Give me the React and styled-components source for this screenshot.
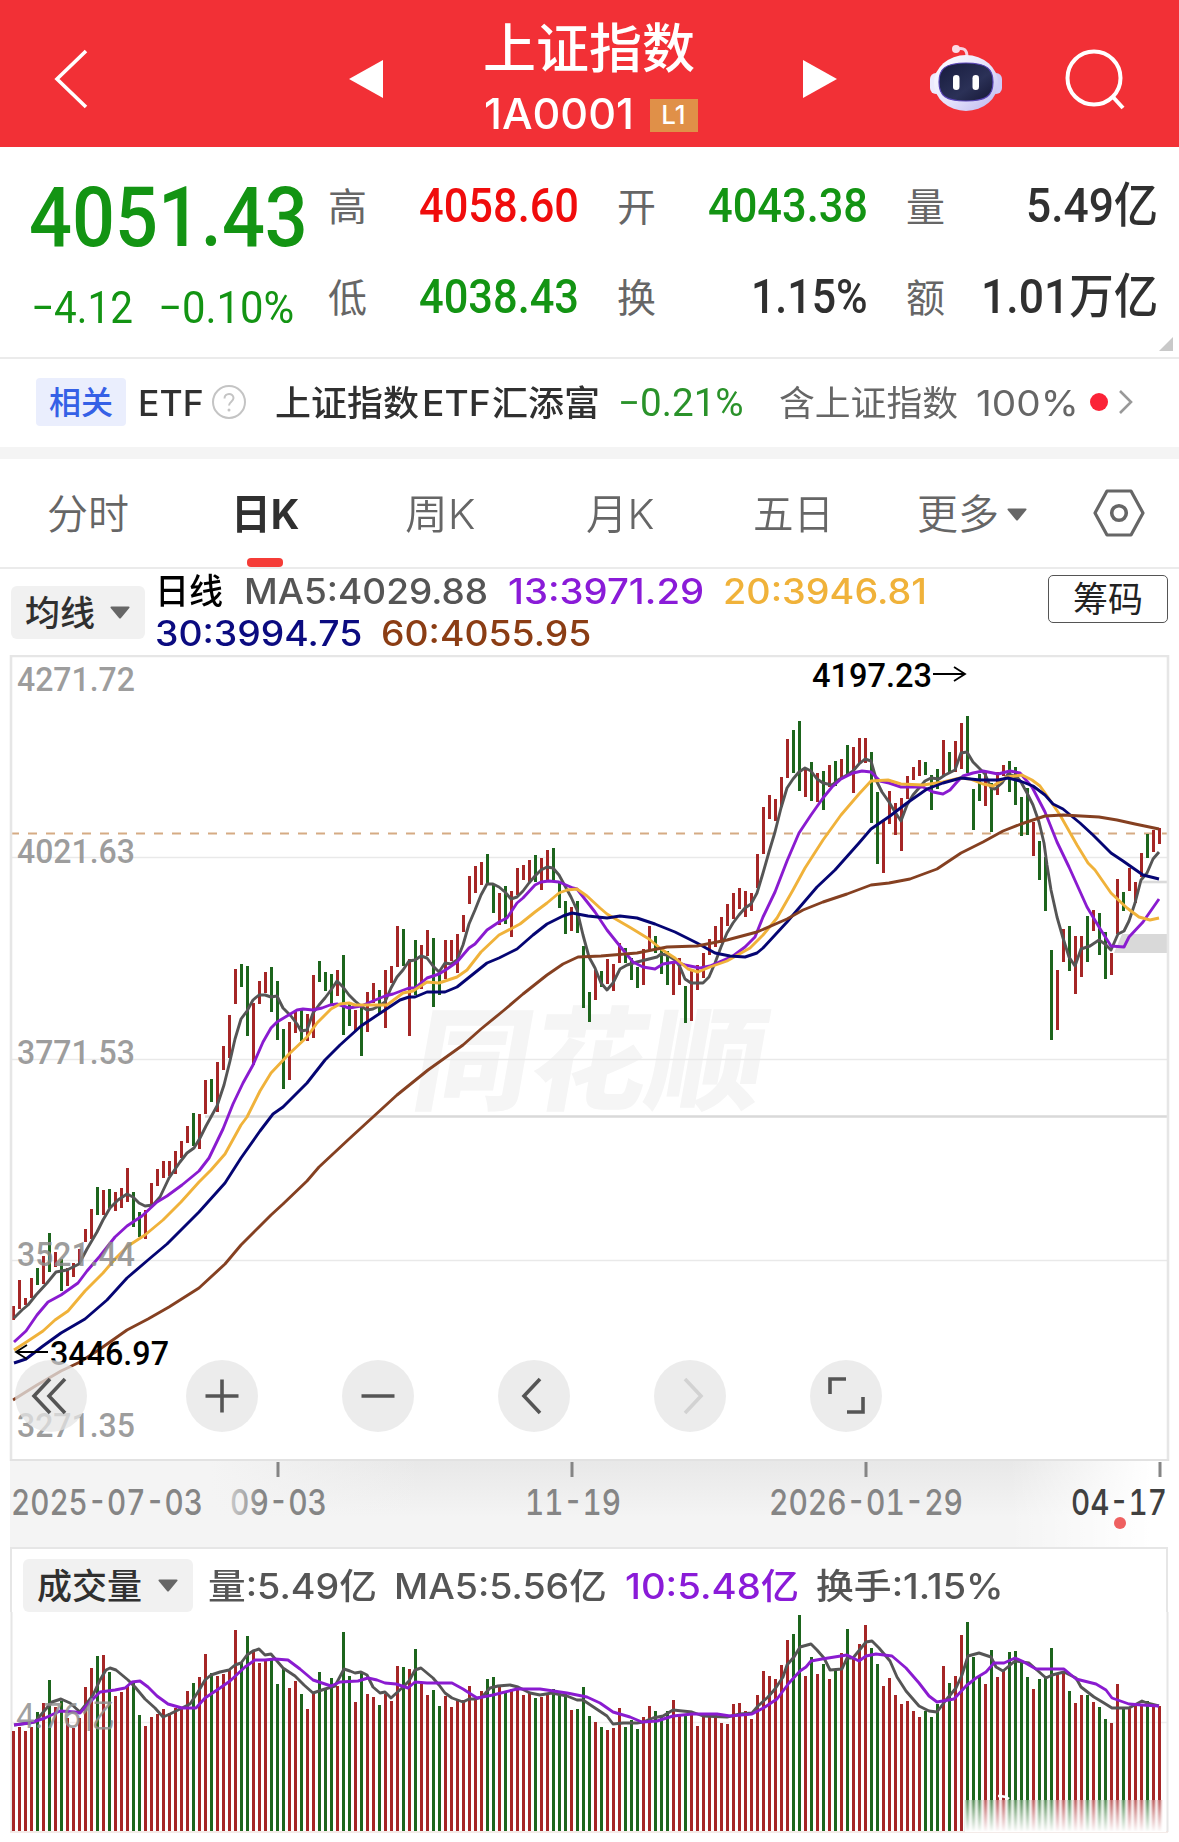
import React, { useLayoutEffect, useRef, useState } from 'react'
import styled, { createGlobalStyle } from 'styled-components'

const RED = '#a52626'
const GREEN = '#1d651d'
const DIN = "Roboto, 'Noto Sans CJK SC', sans-serif"
const SANS = "Inter, 'Noto Sans CJK SC', sans-serif"

// one entry per trading day: high, low, volume top, r(ise) / g (fall)
const DAYS = `
1306 1320 1731 r|1280 1309 1727 r|1298 1305 1731 r|1278 1298 1727 r|1268 1285 1712 g|1256 1284 1703 r|1233 1272 1680 g|1252 1267 1707 r
1259 1291 1701 g|1268 1286 1718 r|1263 1277 1728 r|1249 1264 1718 r|1229 1242 1687 r|1209 1239 1668 r|1187 1215 1656 g|1190 1215 1655 r
1189 1208 1672 g|1192 1211 1696 r|1188 1208 1692 r|1168 1202 1686 r|1192 1227 1683 g|1212 1237 1715 g|1210 1239 1726 r|1183 1205 1717 r
1169 1186 1714 r|1161 1178 1709 r|1161 1176 1713 r|1151 1174 1708 r|1141 1158 1708 r|1126 1143 1691 r|1113 1146 1683 g|1114 1149 1677 r
1080 1114 1654 r|1079 1102 1673 g|1062 1112 1676 r|1046 1070 1674 r|1015 1058 1670 r|969 1004 1630 r|964 987 1663 g|966 1036 1636 g
1003 1065 1651 r|981 1004 1663 r|972 993 1660 r|967 1012 1660 g|981 1040 1684 g|1029 1089 1668 g|1022 1080 1688 r|1010 1033 1681 r
1010 1041 1694 g|1014 1041 1709 r|975 1038 1693 r|961 982 1672 g|972 991 1688 g|974 1004 1678 g|970 996 1686 r|955 1035 1632 g
1004 1026 1676 g|1010 1031 1702 r|1005 1056 1673 g|992 1032 1694 r|983 1003 1697 r|990 1013 1705 g|970 1028 1694 r|966 983 1701 r
926 967 1666 r|929 966 1667 g|959 1036 1669 r|940 995 1649 g|945 989 1683 r|930 956 1695 r|938 1007 1690 g|970 995 1706 g
940 979 1696 r|940 961 1707 r|934 973 1701 r|915 932 1700 r|876 904 1686 r|866 893 1698 r|862 885 1691 r|854 884 1679 g
885 913 1677 g|893 925 1687 r|886 924 1691 g|891 937 1689 r|868 895 1688 r|865 880 1695 r|860 882 1692 r|855 882 1698 g
858 890 1697 r|850 880 1694 r|848 880 1689 g|883 908 1693 g|901 934 1694 g|907 931 1710 r|901 933 1709 g|946 1008 1687 g
992 1022 1716 g|970 1000 1722 r|971 987 1727 g|959 984 1730 r|964 991 1728 r|943 963 1708 r|948 963 1727 g|958 980 1720 g
967 988 1729 g|949 985 1717 r|926 951 1706 r|936 953 1711 g|948 974 1717 g|951 985 1711 g|962 995 1700 r|958 985 1715 r
986 1023 1715 g|971 1021 1712 r|965 990 1726 r|953 978 1716 r|939 955 1716 r|926 947 1713 r|917 943 1723 r|904 926 1724 r
893 919 1704 r|888 909 1703 r|891 917 1711 r|893 911 1719 r|854 888 1695 r|807 854 1671 r|795 819 1676 r|799 821 1679 r
777 807 1665 r|739 778 1640 r|730 773 1634 g|721 791 1615 g|768 797 1676 r|762 801 1657 g|773 802 1674 r|771 810 1664 g
765 787 1679 r|761 786 1670 g|759 779 1653 r|745 774 1629 g|747 793 1658 r|738 763 1644 r|738 763 1625 r|752 823 1648 g
792 864 1664 g|820 873 1686 r|791 824 1678 r|803 835 1695 r|798 851 1704 r|776 799 1701 r|767 780 1711 r|760 776 1717 r
762 775 1711 g|775 810 1717 g|769 789 1704 g|740 775 1666 r|752 773 1683 g|741 772 1676 r|723 769 1635 r|716 773 1622 g
789 830 1657 g|774 801 1676 g|772 806 1684 r|783 832 1650 g|772 795 1677 r|765 776 1670 r|761 792 1652 g|767 805 1651 g
797 836 1663 g|788 835 1677 g|822 856 1689 r|841 880 1679 g|857 911 1676 g|950 1040 1648 g|970 1030 1674 r|929 962 1673 r
926 971 1691 g|936 994 1703 r|936 977 1695 r|916 962 1695 g|910 931 1702 r|913 955 1707 g|932 979 1719 g|953 975 1723 r
879 934 1684 r|892 911 1709 g|868 891 1708 r|882 903 1706 r|853 877 1705 r|834 858 1701 g|830 852 1706 r|828 844 1706 r
`
    .trim()
    .split(/[|\n]/)
    .map((row, i) => {
        const [high, low, vol, dir] = row.split(' ')
        return { x: 11 + i * 6, high: +high, low: +low, vol: +vol, color: dir === 'r' ? RED : GREEN }
    })

const PRICE_LINES = [
    {
        color: '#555555',
        points: '14,1318 22,1310 28,1305 36,1295 47,1283 56,1272 67,1270 79,1264 87,1249 97,1232 103,1220 110,1208 118,1200 127,1194 133,1197 139,1203 145,1206 153,1205 160,1197 169,1178 180,1162 187,1153 194,1148 200,1138 206,1126 217,1106 224,1085 230,1061 235,1039 241,1019 247,1011 253,1000 259,995 265,995 271,997 277,996 283,1008 291,1016 297,1024 301,1031 307,1030 313,1013 319,1005 325,998 331,990 337,981 343,987 349,995 355,1001 361,1006 367,1010 373,1009 379,1006 385,1002 391,988 397,977 403,970 409,961 415,960 421,956 427,958 433,966 439,972 445,963 451,964 457,960 463,945 469,924 475,910 481,895 487,884 493,884 499,887 505,892 511,899 517,897 523,891 529,883 535,876 541,870 547,867 553,868 559,875 565,886 571,897 577,910 583,935 589,957 595,968 601,983 607,990 613,983 620,969 627,965 637,962 649,959 657,957 661,954 667,955 675,960 680,967 685,979 691,983 703,983 709,977 715,963 721,947 727,933 733,923 739,915 745,908 751,904 757,893 763,873 769,852 775,832 781,808 787,788 793,779 799,772 805,768 811,771 817,779 823,783 832,785 838,780 847,775 853,771 859,764 865,759 871,761 877,782 882,792 889,802 895,812 901,821 907,805 913,795 919,788 925,781 931,778 939,779 945,775 955,770 961,753 967,752 973,762 981,770 985,774 991,788 995,789 1002,783 1008,774 1017,777 1021,782 1027,793 1033,805 1039,822 1044,843 1047,865 1051,890 1057,917 1063,938 1069,957 1075,966 1081,949 1090,946 1099,940 1105,944 1111,950 1118,934 1124,931 1129,921 1135,903 1141,880 1147,873 1153,859 1159,852',
    },
    {
        color: '#8a1bd0',
        points: '14,1342 26,1331 37,1315 48,1302 61,1295 78,1283 87,1271 100,1256 115,1237 127,1226 142,1216 157,1202 167,1196 182,1185 199,1171 209,1158 223,1129 233,1104 243,1083 253,1065 263,1042 271,1028 277,1022 287,1016 297,1010 303,1009 313,1010 322,1008 330,1005 337,1004 349,1008 361,1006 373,1001 385,996 393,994 409,988 415,988 427,978 439,974 447,969 457,962 469,948 475,944 487,930 499,922 507,918 517,903 523,898 535,885 541,882 549,881 559,882 573,888 577,889 595,912 607,930 619,945 633,962 643,967 655,969 663,964 675,962 685,965 700,968 710,966 733,956 745,947 755,937 763,917 775,892 787,861 799,833 811,815 823,798 832,787 841,779 853,773 862,771 871,772 877,778 880,781 889,783 901,787 923,787 933,792 943,794 950,790 957,782 963,776 973,773 983,771 998,774 1010,771 1020,773 1032,787 1045,812 1057,842 1069,867 1087,907 1099,927 1111,946 1124,947 1129,937 1143,922 1159,899',
    },
    {
        color: '#f0b23a',
        points: '14,1350 28,1341 43,1331 55,1320 68,1311 85,1291 103,1273 115,1259 128,1246 145,1235 163,1220 181,1202 199,1182 211,1170 225,1154 241,1125 247,1117 260,1091 271,1073 289,1054 307,1037 317,1023 331,1009 340,1004 349,1003 355,1005 370,1005 387,1005 403,993 413,991 427,982 439,983 457,977 467,970 481,952 499,935 520,924 535,912 547,903 559,893 567,890 577,889 587,896 600,908 607,914 631,928 649,939 661,949 675,958 688,969 698,972 710,967 727,961 750,948 763,935 777,918 793,890 805,868 823,840 841,815 859,794 871,781 888,780 901,784 923,785 943,782 960,778 970,779 983,784 993,786 1007,777 1022,775 1032,780 1040,786 1045,793 1060,815 1077,845 1088,863 1095,870 1111,893 1127,908 1139,917 1150,920 1159,918',
    },
    {
        color: '#050573',
        points: '14,1363 26,1359 43,1346 61,1333 85,1319 107,1300 127,1278 148,1260 167,1244 181,1230 199,1212 225,1183 241,1158 260,1131 273,1114 283,1107 295,1095 307,1083 325,1060 340,1045 361,1026 385,1010 400,1000 409,997 415,997 427,992 445,992 457,987 487,963 499,958 517,949 533,935 547,924 563,916 572,913 588,916 607,918 620,916 637,918 655,924 675,932 697,943 715,953 730,956 745,957 757,953 763,948 787,922 817,887 835,870 859,843 871,829 890,816 907,803 927,789 943,783 961,778 980,780 998,780 1008,778 1020,781 1033,786 1045,795 1053,804 1063,809 1080,823 1093,835 1111,853 1123,861 1143,875 1159,879',
    },
    {
        color: '#854021',
        points: '13,1400 37,1385 61,1371 80,1362 100,1349 127,1330 148,1319 169,1307 199,1288 225,1264 241,1245 271,1215 283,1204 307,1181 319,1167 349,1139 373,1117 397,1095 428,1070 463,1045 481,1029 503,1011 523,994 547,975 563,964 578,957 601,956 637,953 667,947 697,946 727,940 757,932 787,919 803,910 823,902 847,894 871,885 889,883 910,879 937,869 961,853 983,842 1003,831 1021,824 1045,816 1063,815 1081,816 1099,817 1117,820 1135,824 1159,829',
    },
]

const VOLUME_LINES = [
    {
        color: '#555555',
        points: '14,1725 35,1722 45,1710 52,1702 61,1699 70,1703 80,1712 87,1703 93,1695 100,1680 106,1670 110,1668 116,1670 128,1680 135,1687 145,1699 155,1708 163,1717 170,1714 182,1708 190,1704 198,1692 205,1680 211,1675 220,1672 229,1670 235,1665 241,1663 247,1655 253,1651 259,1649 265,1655 271,1654 277,1661 283,1668 295,1676 304,1685 313,1693 325,1689 335,1686 344,1669 350,1671 355,1673 361,1672 367,1675 373,1687 380,1693 385,1692 391,1698 403,1687 409,1681 415,1670 421,1668 427,1673 433,1678 439,1685 445,1693 452,1698 463,1702 469,1699 475,1699 482,1697 490,1688 498,1686 510,1685 518,1687 530,1693 540,1695 552,1693 567,1696 577,1700 583,1700 595,1708 607,1716 613,1724 623,1723 637,1723 643,1722 653,1718 663,1716 673,1710 692,1712 703,1716 727,1717 740,1714 752,1713 758,1706 768,1697 775,1689 783,1677 787,1665 794,1657 800,1647 811,1644 817,1650 824,1658 830,1670 842,1669 847,1658 853,1658 866,1642 872,1641 879,1648 890,1661 897,1677 906,1691 919,1706 929,1711 937,1712 946,1700 956,1688 962,1675 968,1656 979,1653 991,1657 996,1667 1003,1671 1015,1661 1029,1663 1046,1678 1052,1675 1064,1672 1076,1678 1081,1687 1094,1697 1104,1703 1112,1708 1129,1708 1142,1701 1147,1703 1159,1706',
    },
    {
        color: '#8a1bd0',
        points: '14,1725 30,1723 45,1718 60,1711 75,1712 80,1713 90,1702 100,1692 115,1690 125,1688 132,1682 140,1681 148,1687 157,1696 168,1704 182,1708 196,1708 205,1698 220,1688 230,1681 245,1667 255,1660 265,1660 275,1659 288,1660 300,1669 313,1680 331,1686 340,1682 358,1681 368,1678 377,1680 385,1683 396,1684 408,1688 415,1682 427,1683 452,1683 463,1689 477,1698 493,1695 517,1689 540,1689 567,1693 587,1697 600,1703 613,1712 630,1717 642,1722 657,1721 673,1716 692,1714 717,1714 730,1716 752,1714 765,1707 777,1699 789,1683 800,1671 806,1667 811,1661 822,1659 847,1655 859,1661 866,1656 876,1654 892,1656 906,1668 919,1683 929,1696 937,1702 954,1699 966,1686 976,1678 986,1672 994,1663 1004,1663 1015,1658 1022,1661 1036,1669 1064,1669 1076,1679 1096,1684 1106,1690 1112,1698 1129,1704 1142,1705 1159,1706',
    },
]

// squeezes or stretches a run of text to the given width
const FitText = ({ width, children, ...rest }) => {
    const ref = useRef(null)
    const [scale, setScale] = useState(1)
    useLayoutEffect(() => {
        setScale(width / ref.current.offsetWidth)
    }, [width, children])
    return (
        <FitBox $w={width} {...rest}>
            <FitInner ref={ref} style={{ transform: `scaleX(${scale})` }}>{children}</FitInner>
        </FitBox>
    )
}

const ChartText = ({ x, y, width, children, ...rest }) => (
    <text x={x} y={y} textLength={width} lengthAdjust="spacingAndGlyphs" {...rest}>{children}</text>
)

const Lines = ({ data, width }) => data.map(({ color, points }) => (
    <polyline key={color} points={points} fill="none" stroke={color} strokeWidth={width} strokeLinejoin="round" />
))

const Robot = () => (
    <svg width="72" height="68" viewBox="0 0 72 68">
        <defs>
            <linearGradient id="shell" x1="0" y1="0" x2="1" y2="1">
                <stop offset="0" stopColor="#ffffff" />
                <stop offset="0.55" stopColor="#e4e2fb" />
                <stop offset="1" stopColor="#b9b4ee" />
            </linearGradient>
            <linearGradient id="face" x1="0" y1="0" x2="1" y2="1">
                <stop offset="0" stopColor="#171b3d" />
                <stop offset="0.6" stopColor="#2b3157" />
                <stop offset="1" stopColor="#151634" />
            </linearGradient>
        </defs>
        <path d="M27 5 C34 3 37 6 37 13" fill="none" stroke="#f6d3e2" strokeWidth="3" />
        <circle cx="26" cy="5" r="4" fill="#fbdce6" />
        <rect x="0" y="29" width="12" height="21" rx="6" fill="#eceafd" />
        <rect x="60" y="29" width="12" height="21" rx="6" fill="#cfcaf7" />
        <ellipse cx="36" cy="39" rx="32" ry="28" fill="url(#shell)" />
        <path d="M36 19 C57 19 63 25 63 38 C63 52 56 57 36 57 C16 57 9 52 9 38 C9 25 15 19 36 19Z" fill="url(#face)" stroke="#5a45b8" strokeWidth="1.2" />
        <rect x="23" y="31" width="6.5" height="15" rx="3.2" fill="#fff" />
        <rect x="42.5" y="31" width="6.5" height="15" rx="3.2" fill="#fff" />
    </svg>
)

const Caret = ({ color = '#666' }) => (
    <svg width="20" height="13" viewBox="0 0 20 13">
        <path d="M1.5 0.5h17a1 1 0 0 1 .8 1.5L11 12a1.3 1.3 0 0 1-2 0L.7 2a1 1 0 0 1 .8-1.5z" fill={color} />
    </svg>
)

const CONTROLS = [
    { id: 'first', d: 'M35 19 19 36 35 53 M50 19 34 36 50 53' },
    { id: 'zoom-in', d: 'M19.5 36H52.5M36 19.5V52.5' },
    { id: 'zoom-out', d: 'M19.5 36H52.5' },
    { id: 'prev', d: 'M42 19 26 36 42 53' },
    { id: 'next', d: 'M31 19 47 36 31 53', off: true },
    { id: 'full', d: 'M20 34V19H36M53 37V52H37' },
]

const TABS = [
    { label: '分时', w: 176, fit: 82 },
    { label: '日K', w: 179, fit: 69, active: true },
    { label: '周K', w: 170, fit: 71 },
    { label: '月K', w: 190, fit: 69 },
    { label: '五日', w: 156, fit: 81 },
    { label: '更多', w: 202, fit: 82, more: true },
]

const STATS = [
    { label: '高', value: '4058.60', fit: 160, color: '#f00c0c' },
    { label: '开', value: '4043.38', fit: 160, color: '#139413' },
    { label: '量', value: '5.49亿', fit: 132, color: '#303030' },
    { label: '低', value: '4038.43', fit: 160, color: '#139413' },
    { label: '换', value: '1.15%', fit: 117, color: '#303030' },
    { label: '额', value: '1.01万亿', fit: 177, color: '#303030' },
]

const GRID = [857, 1059, 1260]
const SCALE = [['4271.72', 691], ['4021.63', 863], ['3771.53', 1064], ['3521.44', 1266], ['3271.35', 1437]]

function App() {
    return (
        <Page>
            <GlobalStyle />
            <Header>
                <HeaderIcon $left={53} width="36" height="62" viewBox="0 0 36 62">
                    <path d="M33 3 4 31 33 59" fill="none" stroke="#fff" strokeWidth="3.6" />
                </HeaderIcon>
                <HeaderIcon $left={260} width="34" height="38" viewBox="0 0 34 38">
                    <path d="M34 0V38L0 19z" fill="#fff" />
                </HeaderIcon>
                <TitleColumn>
                    <Title><FitText width={212}>上证指数</FitText></Title>
                    <CodeRow>
                        <FitText width={150}>1A0001</FitText>
                        <Level>L1</Level>
                    </CodeRow>
                </TitleColumn>
                <HeaderIcon width="34" height="38" viewBox="0 0 34 38">
                    <path d="M0 0V38L34 19z" fill="#fff" />
                </HeaderIcon>
                <RobotSlot><Robot /></RobotSlot>
                <HeaderIcon $left={62} width="62" height="62" viewBox="0 0 62 62">
                    <circle cx="30" cy="30" r="26.5" fill="none" stroke="#fff" strokeWidth="4" />
                    <path d="M49 49 59 60" stroke="#fff" strokeWidth="4" />
                </HeaderIcon>
            </Header>

            <Quote>
                <PriceColumn>
                    <Price><FitText width={279}>4051.43</FitText></Price>
                    <Change>
                        <FitText width={102}>−4.12</FitText>
                        <FitText width={136}>−0.10%</FitText>
                    </Change>
                </PriceColumn>
                <StatGrid>
                    {STATS.map(s => (
                        <Stat key={s.label}>
                            <StatLabel>{s.label}</StatLabel>
                            <StatValue $color={s.color}><FitText width={s.fit}>{s.value}</FitText></StatValue>
                        </Stat>
                    ))}
                </StatGrid>
                <Corner />
            </Quote>

            <EtfRow>
                <Related>相关</Related>
                <EtfText $left={12} $bold><FitText width={66}>ETF</FitText></EtfText>
                <Help width="36" height="36" viewBox="0 0 36 36">
                    <circle cx="18" cy="18" r="16" fill="none" stroke="#c4c4c4" strokeWidth="2" />
                    <path d="M13.5 14.5c0-6 9-6 9-.5 0 3.5-4.5 3.8-4.5 7.5" fill="none" stroke="#c4c4c4" strokeWidth="2" />
                    <circle cx="18" cy="26" r="1.5" fill="#c4c4c4" />
                </Help>
                <EtfText $left={28} $bold>
                    <FitText width={144}>上证指数</FitText>
                    <EtfName><FitText width={69}>ETF</FitText></EtfName>
                    <FitText width={108}>汇添富</FitText>
                </EtfText>
                <EtfChange><FitText width={126}>−0.21%</FitText></EtfChange>
                <EtfText $left={35}><FitText width={179}>含上证指数</FitText></EtfText>
                <EtfText $left={18}><FitText width={103}>100%</FitText></EtfText>
                <Dot />
                <svg width="16" height="26" viewBox="0 0 16 26">
                    <path d="M2 2 13 13 2 24" fill="none" stroke="#999" strokeWidth="2.6" />
                </svg>
            </EtfRow>
            <Strip />

            <Tabs>
                {TABS.map(t => (
                    <Tab key={t.label} $w={t.w} $active={t.active}>
                        <FitText width={t.fit}>{t.label}</FitText>
                        {t.more && <MoreCaret><Caret /></MoreCaret>}
                        {t.active && <Underline />}
                    </Tab>
                ))}
                <Tab $w={92}>
                    <Hexagon width="52" height="48" viewBox="0 0 52 48">
                        <path d="M14 2H38L50 24 38 46H14L2 24z" fill="none" stroke="#666" strokeWidth="3.2" strokeLinejoin="round" />
                        <circle cx="26" cy="24" r="7.3" fill="none" stroke="#666" strokeWidth="3.6" />
                    </Hexagon>
                </Tab>
            </Tabs>

            <Averages>
                <Picker $w={134}><FitText width={70}>均线</FitText><Caret /></Picker>
                <Legend>
                    <LegendRow>
                        <LegendItem $color="#000"><FitText width={68}>日线</FitText></LegendItem>
                        <LegendItem $color="#555" $left={21}><FitText width={244}>MA5:4029.88</FitText></LegendItem>
                        <LegendItem $color="#8a1bd8" $left={20}><FitText width={196}>13:3971.29</FitText></LegendItem>
                        <LegendItem $color="#f0b23a" $left={19}><FitText width={204}>20:3946.81</FitText></LegendItem>
                    </LegendRow>
                    <LegendRow>
                        <LegendItem $color="#0b0b80"><FitText width={207}>30:3994.75</FitText></LegendItem>
                        <LegendItem $color="#8b3d14" $left={19}><FitText width={210}>60:4055.95</FitText></LegendItem>
                    </LegendRow>
                </Legend>
                <ChipButton>筹码</ChipButton>
            </Averages>

            <PricePanel>
                <svg width="1179" height="806" viewBox="0 655 1179 806">
                    <text x="417" y="1101" fontSize="112" fontWeight="900" fill="#f5f5f5" textLength="350" lengthAdjust="spacingAndGlyphs" transform="translate(186 0) skewX(-10)" fontFamily="Noto Sans CJK SC, sans-serif">同花顺</text>
                    {GRID.map(y => <path key={y} d={`M12 ${y}.5H1167`} stroke="#e9e9e9" strokeWidth="1.5" />)}
                    <path d="M205 1116.5H1168" stroke="#d9d9d9" strokeWidth="2.6" />
                    <path d="M1142 882H1168" stroke="#dadada" strokeWidth="2.6" />
                    <path d="M1122 934H1168V953H1114z" fill="#d9d9d9" />
                    <path d="M10 833.5H1169" stroke="#d5ab84" strokeWidth="1.8" strokeDasharray="9 9" />
                    {DAYS.map(d => <rect key={d.x} x={d.x + 1} y={d.high} width="3" height={d.low - d.high} fill={d.color} />)}
                    <Lines data={PRICE_LINES} width={2.9} />
                    <path d="M11 1461V656H1168V1461" fill="none" stroke="#e6e6e6" strokeWidth="2.6" />
                    <path d="M10 1460H1169" stroke="#e2e2e2" strokeWidth="2" />
                    {SCALE.map(([label, y]) => (
                        <ChartText key={label} x={17} y={y} width={118} fontSize="34" fontWeight="500" fill="#8c8c8c" fillOpacity="0.85">{label}</ChartText>
                    ))}
                    <ChartText x={812} y={687} width={120} fontSize="34" fontWeight="500">4197.23</ChartText>
                    <path d="M933 674H965M954 667 965 674 954 681" fill="none" stroke="#000" strokeWidth="1.8" />
                    <ChartText x={50} y={1365} width={119} fontSize="34" fontWeight="500">3446.97</ChartText>
                    <path d="M48 1352H16M27 1345 16 1352 27 1359" fill="none" stroke="#000" strokeWidth="1.8" />
                </svg>
                <Controls>
                    {CONTROLS.map(c => (
                        <Control key={c.id} $off={c.off}>
                            <svg width="72" height="72" viewBox="0 0 72 72"><path d={c.d} /></svg>
                        </Control>
                    ))}
                </Controls>
            </PricePanel>

            <DateAxis>
                <svg width="1179" height="86" viewBox="0 1461 1179 86">
                    <defs>
                        <linearGradient id="dateFade" gradientUnits="userSpaceOnUse" x1="231" y1="0" x2="262" y2="0">
                            <stop offset="0" stopColor="#c8c8c8" />
                            <stop offset="1" stopColor="#858585" />
                        </linearGradient>
                    </defs>
                    {[278, 572, 866, 1160].map(x => <path key={x} d={`M${x} 1462V1477`} stroke="#858585" strokeWidth="3" />)}
                    <DateText x={11} y={1515} width={192}>2025-07-03</DateText>
                    <DateText x={230} y={1515} width={97} $fill="url(#dateFade)">09-03</DateText>
                    <DateText x={525} y={1515} width={96}>11-19</DateText>
                    <DateText x={769} y={1515} width={194}>2026-01-29</DateText>
                    <DateText x={1071} y={1515} width={96} $fill="#404040">04-17</DateText>
                    <circle cx="1120" cy="1523" r="6" fill="#ee6060" />
                </svg>
            </DateAxis>

            <VolumePanel>
                <VolumeLegend>
                    <Picker $w={170}><FitText width={105}>成交量</FitText><Caret /></Picker>
                    <LegendItem $color="#555" $left={15}><FitText width={169}>量:5.49亿</FitText></LegendItem>
                    <LegendItem $color="#555" $left={17}><FitText width={213}>MA5:5.56亿</FitText></LegendItem>
                    <LegendItem $color="#8a1bd8" $left={18}><FitText width={174}>10:5.48亿</FitText></LegendItem>
                    <LegendItem $color="#555" $left={17}><FitText width={188}>换手:1.15%</FitText></LegendItem>
                </VolumeLegend>
                <svg width="1179" height="230" viewBox="0 1612 1179 230">
                    <defs>
                        <linearGradient id="fade" x1="0" y1="0" x2="0" y2="1">
                            <stop offset="0" stopColor="#fff" stopOpacity="0.15" />
                            <stop offset="0.5" stopColor="#fff" stopOpacity="0.6" />
                            <stop offset="1" stopColor="#fff" />
                        </linearGradient>
                        <filter id="smear" x="-5%" y="-20%" width="110%" height="140%">
                            <feGaussianBlur stdDeviation="1.3 0" />
                        </filter>
                    </defs>
                    <path d="M12 1722.5H1167" stroke="#eeeeee" strokeWidth="1.5" />
                    <path d="M11.5 1612V1832M1167.5 1612V1832" stroke="#e6e6e6" strokeWidth="2" />
                    <path d="M10 1832H1168" stroke="#f0e4e0" strokeWidth="1.5" />
                    {DAYS.map((d, i) => (
                        <rect key={d.x} x={d.x + 1} y={d.vol} width="3" height={(i > 158 ? 1800 : 1831) - d.vol} fill={d.color} />
                    ))}
                    <g filter="url(#smear)">
                        {DAYS.slice(159).map(d => <rect key={d.x} x={d.x + 1} y="1800" width="3" height="31" fill={d.color} />)}
                    </g>
                    <rect x="965" y="1800" width="201" height="32" fill="url(#fade)" />
                    <path d="M998 1796Q1006 1796 1009 1799" fill="none" stroke="#fff" strokeWidth="2.5" />
                    <Lines data={VOLUME_LINES} width={2.9} />
                    <ChartText x={16} y={1728} width={99} fontSize="35" fill="#909090" fillOpacity="0.85">4.76亿</ChartText>
                </svg>
            </VolumePanel>
        </Page>
    )
}

const GlobalStyle = createGlobalStyle`
    * {
        box-sizing: border-box;
    }
    body {
        margin: 0;
        background: #fff;
    }
    svg {
        display: block;
        flex-shrink: 0;
    }
`;

const Page = styled.div`
    width: 1179px;
    height: 1842px;
    overflow: hidden;
    background: #fff;
    font-family: ${SANS};
`;

const FitBox = styled.span`
    display: inline-block;
    flex-shrink: 0;
    width: ${p => p.$w}px;
    text-align: left;
`;

const FitInner = styled.span`
    display: inline-block;
    white-space: nowrap;
    transform-origin: 0 50%;
`;

const Header = styled.header`
    display: flex;
    align-items: center;
    height: 147px;
    background: #f23036;
    color: #fff;
`;

const HeaderIcon = styled.svg`
    margin-top: 11px;
    margin-left: ${p => p.$left || 0}px;
`;

const RobotSlot = styled.div`
    margin: 9px 0 0 93px;
`;

const TitleColumn = styled.div`
    display: flex;
    flex-direction: column;
    align-items: center;
    align-self: stretch;
    width: 420px;
    padding: 17px 8px 0 0;
`;

const Title = styled.div`
    font-size: 53px;
    font-weight: 500;
    line-height: 64px;
`;

const CodeRow = styled.div`
    display: flex;
    align-items: center;
    gap: 16px;
    margin: 2px 0 0 3px;
    font-size: 42px;
    font-weight: 500;
    line-height: 62px;
`;

const Level = styled.span`
    width: 48px;
    height: 33px;
    margin-top: 2px;
    background: #e09048;
    font-size: 26px;
    line-height: 32px;
    text-align: center;
`;

const Quote = styled.section`
    position: relative;
    display: flex;
    height: 212px;
    border-bottom: 2px solid #ebebeb;
    font-family: ${DIN};
`;

const PriceColumn = styled.div`
    width: 328px;
    padding: 24px 0 0 29px;
    color: #139413;
`;

const Price = styled.div`
    font-size: 84px;
    font-weight: 500;
    line-height: 94px;
`;

const Change = styled.div`
    display: flex;
    gap: 25px;
    margin: 13px 0 0 2px;
    font-size: 44px;
    line-height: 60px;
`;

const StatGrid = styled.div`
    display: grid;
    grid-template-columns: 251px 251px 252px;
    grid-template-rows: 60px 60px;
    gap: 31px 38px;
    padding-top: 29px;
`;

const Stat = styled.div`
    display: flex;
    justify-content: space-between;
    line-height: 60px;
`;

const StatLabel = styled.span`
    padding-top: 2px;
    color: #666;
    font-size: 39px;
`;

const StatValue = styled.span`
    color: ${p => p.$color};
    font-size: 48px;
    font-weight: 500;
`;

const Corner = styled.i`
    position: absolute;
    right: 6px;
    bottom: 6px;
    border-style: solid;
    border-width: 0 0 14px 14px;
    border-color: transparent transparent #c9c9c9 transparent;
`;

const EtfRow = styled.section`
    display: flex;
    align-items: center;
    height: 88px;
    padding: 0 0 2px 36px;
`;

const Related = styled.span`
    width: 90px;
    height: 48px;
    border-radius: 4px;
    background: #eaeefd;
    color: #3560e6;
    font-size: 32px;
    font-weight: 500;
    line-height: 49px;
    text-align: center;
`;

const EtfText = styled.span`
    margin-left: ${p => p.$left}px;
    padding-top: 1px;
    color: ${p => p.$bold ? '#303030' : '#666'};
    font-size: 35px;
    font-weight: ${p => p.$bold ? 500 : 400};
    line-height: 48px;
`;

const EtfName = styled.span`
    margin: 0 1px 0 3px;
`;

const EtfChange = styled.span`
    margin-left: 18px;
    padding-top: 1px;
    color: #2a922a;
    font-family: ${DIN};
    font-size: 38px;
    line-height: 48px;
`;

const Help = styled.svg`
    margin-left: 7px;
`;

const Dot = styled.i`
    width: 18px;
    height: 18px;
    margin: 0 10px 0 11px;
    border-radius: 50%;
    background: #fb2337;
`;

const Strip = styled.div`
    height: 12px;
    background: #f4f4f4;
`;

const Tabs = styled.nav`
    display: flex;
    height: 110px;
    border-bottom: 2px solid #ebebeb;
`;

const Tab = styled.div`
    position: relative;
    display: flex;
    align-items: center;
    justify-content: center;
    width: ${p => p.$w}px;
    padding-top: 2px;
    color: ${p => p.$active ? '#303030' : '#666'};
    font-size: 41px;
    font-weight: ${p => p.$active ? 700 : 350};
    line-height: 60px;
`;

const Hexagon = styled.svg`
    margin-top: -2px;
`;

const MoreCaret = styled.span`
    margin-left: 8px;
`;

const Underline = styled.i`
    position: absolute;
    bottom: 0;
    left: 71px;
    width: 36px;
    height: 9px;
    border-radius: 4px;
    background: #f53c37;
`;

const Averages = styled.section`
    display: flex;
    align-items: flex-start;
    height: 86px;
    padding: 0 11px;
`;

const Picker = styled.div`
    display: flex;
    align-items: center;
    justify-content: space-between;
    width: ${p => p.$w}px;
    height: 53px;
    margin-top: 17px;
    padding: 0 15px 0 14px;
    border-radius: 6px;
    background: #f1f1f1;
    color: #303030;
    font-size: 35px;
    font-weight: 500;
    line-height: 54px;
`;

const Legend = styled.div`
    flex: 1;
    padding: 1px 0 0 10px;
`;

const LegendRow = styled.div`
    display: flex;
    height: 42px;
`;

const LegendItem = styled.span`
    margin-left: ${p => p.$left || 0}px;
    color: ${p => p.$color};
    font-size: 35px;
    font-weight: 500;
    line-height: 43px;
`;

const ChipButton = styled.button`
    width: 120px;
    height: 48px;
    margin-top: 6px;
    padding: 0;
    border: 1.5px solid #555;
    border-radius: 5px;
    background: #fff;
    color: #222;
    font: 400 35px/44px ${SANS};
`;

const PricePanel = styled.section`
    position: relative;
    height: 806px;
    font-family: ${DIN};
`;

const Controls = styled.div`
    position: absolute;
    top: 705px;
    left: 15px;
    display: flex;
    gap: 84px;
`;

const Control = styled.button`
    width: 72px;
    height: 72px;
    padding: 0;
    border: 0;
    border-radius: 50%;
    background: rgba(230, 230, 230, 0.75);
    path {
        fill: none;
        stroke: ${p => p.$off ? '#d2d2d2' : '#555'};
        stroke-width: 3.6;
    }
    &:first-child {
        margin-right: 15px;
    }
`;

const DateAxis = styled.section`
    height: 86px;
    background:
        linear-gradient(to right, #fff 10px, transparent 10px, transparent 1010px, #fff 1150px),
        linear-gradient(to right, #f4f4f4 210px, rgba(244, 244, 244, 0) 420px),
        linear-gradient(to bottom, #e8e8e8, #f4f4f4 65%);
`;

const DateText = styled(ChartText)`
    fill: ${p => p.$fill || '#858585'};
    font-family: Inter, sans-serif;
    font-feature-settings: 'case', 'tnum';
    font-size: 36px;
    font-weight: 500;
`;

const VolumePanel = styled.section`
    font-family: ${DIN};
`;

const VolumeLegend = styled.div`
    display: flex;
    align-items: center;
    height: 65px;
    margin: 0 11px 0 10px;
    padding-left: 11px;
    border: 2px solid #e6e6e6;
    border-bottom: 0;
    font-family: ${SANS};
    ${Picker} {
        margin-top: 10px;
    }
    ${LegendItem} {
        margin-top: 12px;
    }
`;

export default App
